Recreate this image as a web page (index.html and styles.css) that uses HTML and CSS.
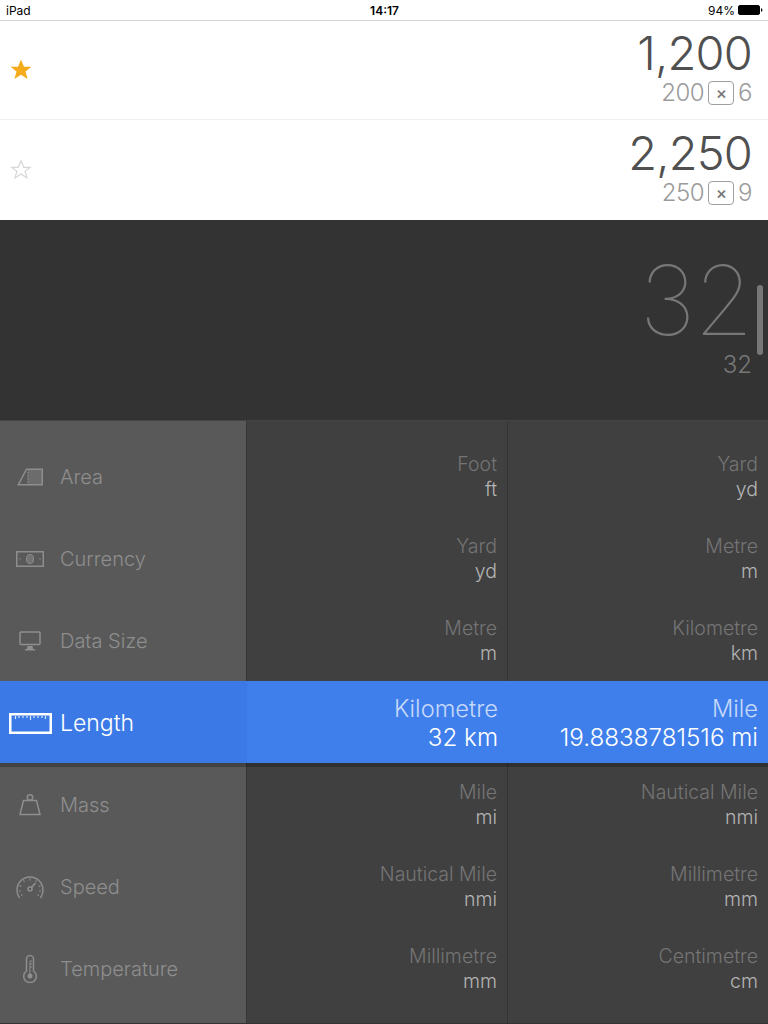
FILE: index.html
```html
<!DOCTYPE html>
<html lang="en">
<head>
  <meta charset="UTF-8" />
  <title>Converter</title>
  <link rel="stylesheet" href="styles.css">
</head>
<body>

  <header class="status-bar">
    <span class="status-left">iPad</span>
    <span class="status-time">14:17</span>
    <span class="status-right">
      94%
      <svg class="battery" width="25" height="10" viewBox="0 0 25 10">
        <rect x="0.5" y="0.5" width="21" height="9" rx="1.5" fill="#000" stroke="#000"/>
        <path d="M23 3.2c1 .2 1.4.8 1.4 1.8s-.4 1.6-1.4 1.800z" fill="#000"/>
      </svg>
    </span>
  </header>

  <section class="favourites">
    <div class="fav-row">
      <svg class="star" width="22" height="22" viewBox="0 0 22 22">
        <path d="M11 .5l3 7.200h7.500l-6 4.800 2.100 7.500-6.600-4.300-6.600 4.300 2.100-7.500-6-4.800H8z" fill="#f4ab1c"/>
      </svg>
      <div class="fav-sum">
        <div class="fav-total">1,200</div>
        <div class="fav-calc">200 <span class="times">×</span> 6</div>
      </div>
    </div>
    <div class="fav-row">
      <svg class="star" width="22" height="22" viewBox="0 0 22 22">
        <path d="M11 1.800l2.800 6.500h6.400l-5.100 4.100 1.900 6.500-6-3.900-6 3.900 1.900-6.500-5.100-4.100h6.400z" fill="none" stroke="#d6d6d6" stroke-width="1.200"/>
      </svg>
      <div class="fav-sum">
        <div class="fav-total">2,250</div>
        <div class="fav-calc">250 <span class="times">×</span> 9</div>
      </div>
    </div>
  </section>

  <section class="display">
    <div class="display-main">32</div>
    <div class="display-sub">32</div>
    <div class="scroll-thumb"></div>
  </section>

  <section class="picker">
    <div class="row row-spacer">
      <div class="cat"></div><div class="unit"></div><div class="unit"></div>
    </div>

    <div class="row">
      <div class="cat">
        <span class="cat-icon">
          <svg width="26" height="18" viewBox="0 0 26 18" fill="none" stroke="#8e8e8e" stroke-width="1.500">
            <path d="M10.500 1.500h15v15h-15z" fill="#8e8e8e" fill-opacity=".35" stroke="none"/>
            <path d="M1.300 16.750L9.500 1.250h15.750v15.500z"/>
            <path d="M11 4v11" stroke-width="1" stroke-dasharray="1.500 1.500"/>
          </svg>
        </span>
        Area
      </div>
      <div class="unit"><span class="unit-name">Foot</span><span class="unit-value">ft</span></div>
      <div class="unit"><span class="unit-name">Yard</span><span class="unit-value">yd</span></div>
    </div>

    <div class="row">
      <div class="cat">
        <span class="cat-icon">
          <svg width="28" height="16" viewBox="0 0 28 16" fill="none" stroke="#8e8e8e" stroke-width="1.500">
            <rect x=".75" y=".75" width="26.500" height="14.500"/>
            <ellipse cx="14" cy="8" rx="3.500" ry="4.500" fill="#8e8e8e" fill-opacity=".5" stroke-width="1"/>
            <path d="M4 7.500v1M24 7.500v1"/>
          </svg>
        </span>
        Currency
      </div>
      <div class="unit"><span class="unit-name">Yard</span><span class="unit-value">yd</span></div>
      <div class="unit"><span class="unit-name">Metre</span><span class="unit-value">m</span></div>
    </div>

    <div class="row">
      <div class="cat">
        <span class="cat-icon">
          <svg width="22" height="20" viewBox="0 0 22 20" fill="#8e8e8e">
            <rect x="1" y="1" width="20" height="12.500" rx="1" fill="none" stroke="#8e8e8e" stroke-width="1.500"/>
            <path d="M8.500 15h5l.5 3h2v1.500H6V18h2z"/>
          </svg>
        </span>
        Data Size
      </div>
      <div class="unit"><span class="unit-name">Metre</span><span class="unit-value">m</span></div>
      <div class="unit"><span class="unit-name">Kilometre</span><span class="unit-value">km</span></div>
    </div>

    <div class="row row-active">
      <div class="cat">
        <span class="cat-icon">
          <svg width="43" height="21" viewBox="0 0 43 21" fill="none" stroke="#fff">
            <rect x="1.250" y="1.250" width="40.500" height="18.500" stroke-width="2.500"/>
            <path d="M6.500 3v3M10 3v2M14 3v2M18 3v2M21.500 3v4M25 3v2M29 3v2M33 3v2M36.500 3v3" stroke-opacity=".8" stroke-width="1.200"/>
          </svg>
        </span>
        Length
      </div>
      <div class="unit"><span class="unit-name">Kilometre</span><span class="unit-value">32 km</span></div>
      <div class="unit"><span class="unit-name">Mile</span><span class="unit-value">19.8838781516 mi</span></div>
    </div>

    <div class="row">
      <div class="cat">
        <span class="cat-icon">
          <svg width="24" height="22" viewBox="0 0 24 22" fill="none" stroke="#8e8e8e" stroke-width="1.500">
            <circle cx="12" cy="3.500" r="2.700"/>
            <path d="M5.500 6.500h13l3.500 14H2z"/>
          </svg>
        </span>
        Mass
      </div>
      <div class="unit"><span class="unit-name">Mile</span><span class="unit-value">mi</span></div>
      <div class="unit"><span class="unit-name">Nautical Mile</span><span class="unit-value">nmi</span></div>
    </div>

    <div class="row">
      <div class="cat">
        <span class="cat-icon">
          <svg width="28" height="24" viewBox="0 0 28 24" fill="none" stroke="#8e8e8e" stroke-width="1.500">
            <path d="M3.500 23C1.800 20.500 1 18 1 15a13 13 0 0 1 26 0c0 3-.8 5.500-2.500 8"/>
            <path d="M14 3.500v2M7.500 5.500l1 1.500M20.500 5.500l-1 1.500M3.500 10.500l1.700 1M24.500 10.500l-1.700 1M3 16h2M23 16h2M5 20.500l1.500-.7M23 20.500l-1.500-.7" stroke-width="1.200"/>
            <circle cx="14" cy="14" r="2"/>
            <path d="M15.500 12.500l4-4.500" stroke-width="1.800"/>
          </svg>
        </span>
        Speed
      </div>
      <div class="unit"><span class="unit-name">Nautical Mile</span><span class="unit-value">nmi</span></div>
      <div class="unit"><span class="unit-name">Millimetre</span><span class="unit-value">mm</span></div>
    </div>

    <div class="row">
      <div class="cat">
        <span class="cat-icon">
          <svg width="16" height="28" viewBox="0 0 16 28" fill="none" stroke="#8e8e8e" stroke-width="1.500">
            <path d="M4.500 16V4a3.500 3.500 0 0 1 7 0v12a6.300 6.300 0 1 1-7 0z"/>
            <circle cx="8" cy="21" r="2.500" fill="#8e8e8e" stroke="none"/>
            <path d="M8 6v13M8 6h2M8 9h2M8 12h2" stroke-width="1"/>
          </svg>
        </span>
        Temperature
      </div>
      <div class="unit"><span class="unit-name">Millimetre</span><span class="unit-value">mm</span></div>
      <div class="unit"><span class="unit-name">Centimetre</span><span class="unit-value">cm</span></div>
    </div>

    <div class="row row-tail">
      <div class="cat"></div><div class="unit"></div><div class="unit"></div>
    </div>
  </section>

</body>
</html>
```

FILE: styles.css
```css
html, body {
  margin: 0;
  height: 1024px;
  overflow: hidden;
}

body {
  font-family: 'Inter', 'Liberation Sans', sans-serif;
  font-weight: 300;
  background-color: #333;
}

/* status bar */
.status-bar {
  height: 20px;
  display: flex;
  justify-content: space-between;
  align-items: center;
  padding: 0 5px 0 6px;
  background: #fff;
  border-bottom: 1px solid #d6d6d6;
  color: #000;
  font-weight: 400;
  font-size: 12px;
}

.status-left,
.status-right {
  flex: 1;
}

.status-time {
  font-weight: 600;
}

.status-right {
  display: flex;
  justify-content: flex-end;
  align-items: center;
  gap: 3px;
}

/* favourites */
.favourites {
  background: #fff;
}

.fav-row {
  height: 98px;
  display: flex;
  justify-content: space-between;
  align-items: center;
  padding: 0 16px 0 10px;
  border-bottom: 1px solid #f0f0f0;
}

.fav-row:last-child {
  height: 100px;
  border-bottom: 0;
}

.fav-sum {
  padding-bottom: 6px;
  text-align: right;
}

.fav-total {
  font-size: 47px;
  line-height: 50px;
  letter-spacing: -.8px;
  color: #505050;
}

.fav-calc {
  display: flex;
  justify-content: flex-end;
  align-items: center;
  gap: 4px;
  margin-top: 2px;
  font-size: 24px;
  line-height: 26px;
  letter-spacing: -.5px;
  color: #9b9b9b;
}

.times {
  width: 24px;
  height: 22px;
  display: flex;
  justify-content: center;
  align-items: center;
  border: 1px solid #a0a0a0;
  border-radius: 4px;
  color: #777;
  font-size: 17px;
  font-weight: 500;
}

/* big display */
.display {
  position: relative;
  height: 200px;
  box-sizing: border-box;
  padding: 30px 16px 0 0;
  background: #333;
  text-align: right;
}

.display-main {
  font-weight: 100;
  font-size: 96px;
  line-height: 100px;
  letter-spacing: -1.500px;
  color: #777;
}

.display-sub {
  font-size: 24px;
  line-height: 30px;
  color: #777;
}

.scroll-thumb {
  position: absolute;
  top: 65px;
  right: 5px;
  width: 6px;
  height: 70px;
  border-radius: 3px;
  background: #777;
}

/* picker */
.picker {
  height: 604px;
  border-top: 1px solid #444;
  box-sizing: border-box;
  overflow: hidden;
}

.row {
  height: 82px;
  display: grid;
  grid-template-columns: 247px 261px 260px;
}

.row-spacer {
  height: 14px;
}

.row-tail {
  height: 14px;
  box-shadow: inset 0 -1px 0 #2b2b2b;
}

.cat {
  display: flex;
  align-items: center;
  box-sizing: border-box;
  padding-top: 2px;
  background: #595959;
  border-right: 1px solid #363636;
  color: #8e8e8e;
  font-size: 20px;
}

.cat-icon {
  width: 60px;
  flex: none;
  display: flex;
  justify-content: center;
}

.unit {
  display: flex;
  flex-direction: column;
  justify-content: center;
  align-items: flex-end;
  box-sizing: border-box;
  padding: 2px 10px 0 0;
  background: #404040;
  border-right: 1px solid #333;
  font-size: 19.500px;
  line-height: 25px;
}

.unit:last-child {
  border-right: 0;
}

.unit-name {
  color: #747474;
}

.unit-value {
  color: #b4b4b4;
}

.row-active {
  position: relative;
  box-shadow: 0 4px 0 rgba(0, 0, 0, .25);
  z-index: 1;
}

.row-active .cat {
  background: #3b7ae6;
  border-right: 0;
  color: #fff;
  font-size: 23px;
}

.row-active .cat-icon {
  justify-content: flex-start;
  padding-left: 9px;
  width: 51px;
}

.row-active .unit {
  background: #3f7fec;
  border-right: 0;
  font-size: 23.700px;
  line-height: 29px;
}

.row-active .unit-name {
  color: #c6d9fa;
}

.row-active .unit-value {
  color: #fff;
  font-size: 24.200px;
}
```
